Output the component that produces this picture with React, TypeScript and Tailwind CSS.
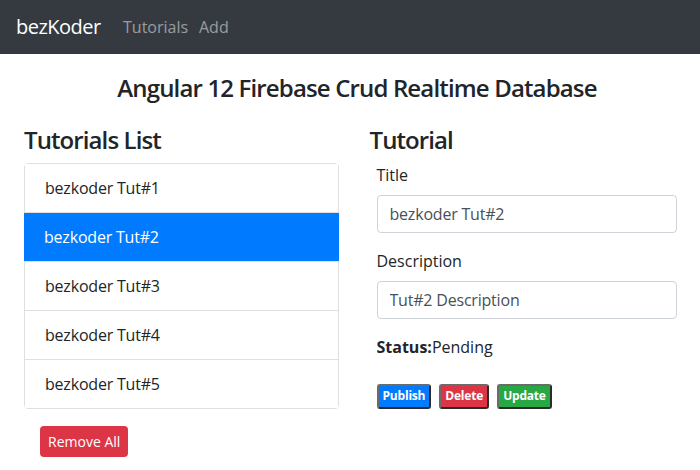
const tutorials = [
  "bezkoder Tut#1",
  "bezkoder Tut#2",
  "bezkoder Tut#3",
  "bezkoder Tut#4",
  "bezkoder Tut#5",
];

function Badge({ label, color }: { label: string; color: string }) {
  return (
    <button
      className={`${color} text-white font-bold text-[12px] leading-none px-[4px] pt-[4px] pb-[5px] tracking-[-0.2px] rounded-[3px] border-2 border-t-[#6b6b6b] border-l-[#6b6b6b] border-b-[#2b2b2b] border-r-[#2b2b2b]`}
    >
      {label}
    </button>
  );
}

export default function App() {
  const current = 1;

  return (
    <div className="min-h-[470px] bg-white text-[#212529] font-['Segoe_UI','Open_Sans',sans-serif]">
      <nav className="h-[54px] bg-[#343a40] flex items-center px-4">
        <a className="text-white text-[20px] w-[107px] tracking-[-0.5px]">bezKoder</a>
        <div className="flex text-[16px] text-white/50">
          <a className="w-[76px]">Tutorials</a>
          <a>Add</a>
        </div>
      </nav>

      <div className="pl-[24px] pr-[16px]">
        <h4 className="mt-[20px] pl-[6px] text-center text-[24px] font-semibold leading-[1.2] tracking-[-0.85px]">
          Angular 12 Firebase Crud Realtime Database
        </h4>

        <div className="mt-[23px] grid grid-cols-2 gap-[30px]">
          <div>
            <h4 className="text-[24px] font-semibold leading-[1.2] mb-2 tracking-[-0.9px]">
              Tutorials List
            </h4>
            <ul className="border border-[#dfdfdf] rounded-[4px]">
              {tutorials.map((t, i) => (
                <li
                  key={t}
                  className={`px-[20px] py-[12px] text-[16px] leading-[24px] tracking-[-0.2px] ${
                    i === current
                      ? "bg-[#007bff] text-white -mx-px"
                      : "bg-white"
                  } ${i > 0 ? "border-t border-[#dfdfdf]" : ""} ${
                    i === current ? "border-[#007bff]" : ""
                  }`}
                >
                  {t}
                </li>
              ))}
            </ul>
            <button className="mt-[17px] ml-4 bg-[#dc3545] text-white text-[14px] leading-[21px] px-[8px] py-[5px] rounded-[4px]">
              Remove All
            </button>
          </div>

          <div>
            <div className="max-w-[300px] mx-auto">
              <h4 className="text-[24px] font-semibold leading-[1.2] mb-2 -ml-[7px] tracking-[-0.9px]">
                Tutorial
              </h4>
              <form>
                <div className="mb-4">
                  <label className="block text-[16px] leading-[24px] mb-2">
                    Title
                  </label>
                  <input
                    className="w-full h-[38px] border border-[#ced4da] rounded-[4px] px-[12px] text-[16px] text-[#495057] outline-none tracking-[-0.2px]"
                    defaultValue="bezkoder Tut#2"
                  />
                </div>
                <div className="mb-4">
                  <label className="block text-[16px] leading-[24px] mb-2">
                    Description
                  </label>
                  <input
                    className="w-full h-[38px] border border-[#ced4da] rounded-[4px] px-[12px] text-[16px] text-[#495057] outline-none tracking-[-0.2px]"
                    defaultValue="Tut#2 Description"
                  />
                </div>
                <div className="text-[16px] leading-[24px]">
                  <label>
                    <strong>Status:</strong>
                  </label>
                  Pending
                </div>
              </form>
              <div className="mt-[25px] flex gap-[8px]">
                <Badge label="Publish" color="bg-[#007bff]" />
                <Badge label="Delete" color="bg-[#dc3545]" />
                <Badge label="Update" color="bg-[#28a745]" />
              </div>
            </div>
          </div>
        </div>
      </div>
    </div>
  );
}
